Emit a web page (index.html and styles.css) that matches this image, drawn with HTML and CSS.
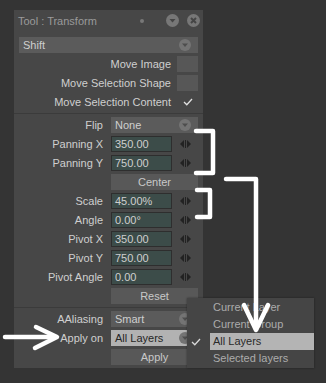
FILE: index.html
```html
<!DOCTYPE html>
<html lang="en">
<head>
    <meta charset="UTF-8">
    <meta name="viewport" content="width=device-width, initial-scale=1.0">
    <title>Tool : Transform</title>
    <link rel="stylesheet" href="styles.css">
</head>
<body>
    <div class="panel">
        <div class="titlebar">
            <span class="title">Tool : Transform</span>
            <span class="dot"></span>
            <svg class="tb-icon" width="13" height="13" viewBox="0 0 13 13">
                <circle cx="6.5" cy="6.5" r="6.5" fill="#777"/>
                <polygon points="3.5,5 9.5,5 6.5,8.5" fill="#454545"/>
            </svg>
            <svg class="tb-icon" width="13" height="13" viewBox="0 0 13 13">
                <circle cx="6.5" cy="6.5" r="6.5" fill="#777"/>
                <path d="M4 4 L9 9 M9 4 L4 9" stroke="#454545" stroke-width="2"/>
            </svg>
        </div>
        <div class="body">
            <div class="select">
                <span>Shift</span>
                <svg class="caret" width="12" height="12" viewBox="0 0 12 12"><circle cx="6" cy="6" r="6" fill="#747474"/><polygon points="3,4.5 9,4.5 6,8" fill="#4e4e4e"/></svg>
            </div>

            <div class="check-row"><span class="label">Move Image</span><span class="box"></span></div>
            <div class="check-row"><span class="label">Move Selection Shape</span><span class="box"></span></div>
            <div class="check-row">
                <span class="label">Move Selection Content</span>
                <span class="tick"><svg width="10" height="8" viewBox="0 0 10 8"><path d="M1 4 L3.8 6.8 L9 1" fill="none" stroke="#e0e0e0" stroke-width="1.3"/></svg></span>
            </div>

            <div class="sep"></div>

            <div class="row">
                <span class="label">Flip</span>
                <div class="select"><span>None</span><svg class="caret" width="12" height="12" viewBox="0 0 12 12"><circle cx="6" cy="6" r="6" fill="#747474"/><polygon points="3,4.5 9,4.5 6,8" fill="#4e4e4e"/></svg></div>
            </div>
            <div class="row">
                <span class="label">Panning X</span>
                <div class="num"><span class="field">350.00</span><svg class="spin" width="11" height="8" viewBox="0 0 11 8"><polygon points="0,4 4,0 4,8" fill="#222"/><rect x="5" y="0" width="1" height="8" fill="#222"/><polygon points="7,0 11,4 7,8" fill="#222"/></svg></div>
            </div>
            <div class="row">
                <span class="label">Panning Y</span>
                <div class="num"><span class="field">750.00</span><svg class="spin" width="11" height="8" viewBox="0 0 11 8"><polygon points="0,4 4,0 4,8" fill="#222"/><rect x="5" y="0" width="1" height="8" fill="#222"/><polygon points="7,0 11,4 7,8" fill="#222"/></svg></div>
            </div>
            <div class="row">
                <span></span>
                <div class="button">Center</div>
            </div>
            <div class="row">
                <span class="label">Scale</span>
                <div class="num"><span class="field">45.00%</span><svg class="spin" width="11" height="8" viewBox="0 0 11 8"><polygon points="0,4 4,0 4,8" fill="#222"/><rect x="5" y="0" width="1" height="8" fill="#222"/><polygon points="7,0 11,4 7,8" fill="#222"/></svg></div>
            </div>
            <div class="row">
                <span class="label">Angle</span>
                <div class="num"><span class="field">0.00°</span><svg class="spin" width="11" height="8" viewBox="0 0 11 8"><polygon points="0,4 4,0 4,8" fill="#222"/><rect x="5" y="0" width="1" height="8" fill="#222"/><polygon points="7,0 11,4 7,8" fill="#222"/></svg></div>
            </div>
            <div class="row">
                <span class="label">Pivot X</span>
                <div class="num"><span class="field">350.00</span><svg class="spin" width="11" height="8" viewBox="0 0 11 8"><polygon points="0,4 4,0 4,8" fill="#222"/><rect x="5" y="0" width="1" height="8" fill="#222"/><polygon points="7,0 11,4 7,8" fill="#222"/></svg></div>
            </div>
            <div class="row">
                <span class="label">Pivot Y</span>
                <div class="num"><span class="field">750.00</span><svg class="spin" width="11" height="8" viewBox="0 0 11 8"><polygon points="0,4 4,0 4,8" fill="#222"/><rect x="5" y="0" width="1" height="8" fill="#222"/><polygon points="7,0 11,4 7,8" fill="#222"/></svg></div>
            </div>
            <div class="row">
                <span class="label">Pivot Angle</span>
                <div class="num"><span class="field">0.00</span><svg class="spin" width="11" height="8" viewBox="0 0 11 8"><polygon points="0,4 4,0 4,8" fill="#222"/><rect x="5" y="0" width="1" height="8" fill="#222"/><polygon points="7,0 11,4 7,8" fill="#222"/></svg></div>
            </div>
            <div class="row">
                <span></span>
                <div class="button">Reset</div>
            </div>

            <div class="sep"></div>

            <div class="row">
                <span class="label">AAliasing</span>
                <div class="select"><span>Smart</span><svg class="caret" width="12" height="12" viewBox="0 0 12 12"><circle cx="6" cy="6" r="6" fill="#747474"/><polygon points="3,4.5 9,4.5 6,8" fill="#4e4e4e"/></svg></div>
            </div>
            <div class="row">
                <span class="label">Apply on</span>
                <div class="select open"><span>All Layers</span><svg class="caret" width="12" height="12" viewBox="0 0 12 12"><circle cx="6" cy="6" r="6" fill="#747474"/><polygon points="3,4.5 9,4.5 6,8" fill="#4e4e4e"/></svg></div>
            </div>
            <div class="row">
                <span></span>
                <div class="button">Apply</div>
            </div>
        </div>
    </div>

    <!-- dropdown list of "Apply on" -->
    <ul class="menu">
        <li>Current Layer</li>
        <li>Current Group</li>
        <li class="selected"><svg class="menu-tick" width="10" height="8" viewBox="0 0 10 8"><path d="M1 4 L3.8 6.8 L9 1" fill="none" stroke="#d8d8d8" stroke-width="1.3"/></svg>All Layers</li>
        <li>Selected layers</li>
    </ul>

    <!-- hand drawn annotations -->
    <svg class="notes" width="326" height="383" viewBox="0 0 326 383">
        <g fill="none" stroke="#fff" stroke-width="4.5" stroke-linecap="round" stroke-linejoin="round">
            <path d="M196 131 H213 V173 H196"/>
            <path d="M197 190 H210 V217 H197"/>
            <path d="M226 179 H256 V329"/>
            <path d="M244 305 L256 330 L268 305"/>
            <path d="M5 337 H55"/>
            <path d="M36 327 L57 337 L35 348"/>
        </g>
    </svg>
</body>
</html>
```

FILE: styles.css
```css
body {
    margin: 0;
    background: #343434;
    font-family: 'Liberation Sans', Arial, sans-serif;
    font-size: 11px;
    position: relative;
    width: 326px;
    height: 383px;
    overflow: hidden;
}
.panel {
    margin: 10px 0 0 14px;
    width: 189px;
    height: 358px;
    background: #474747;
    box-sizing: border-box;
}
.titlebar {
    height: 21px;
    display: flex;
    align-items: center;
    padding: 0 3px 0 4px;
}
.title {
    flex: 1;
    color: #9a9a9a;
}
.dot {
    width: 4px;
    height: 4px;
    border-radius: 50%;
    background: #787878;
    margin-right: 14px;
}
.tb-icon {
    margin-left: 8px;
}
.body {
    padding: 6px 5px 0 5px;
    display: flex;
    flex-direction: column;
    gap: 3px;
}
.select {
    height: 16px;
    line-height: 16px;
    background: #5b5b5b;
    color: #cfcfcf;
    padding: 0 7px 0 4px;
    display: flex;
    align-items: center;
    justify-content: space-between;
}
.select.open {
    background: #b2b2b2;
    color: #262626;
}
.check-row {
    display: grid;
    grid-template-columns: 1fr 21px;
    column-gap: 6px;
    height: 16px;
    line-height: 16px;
}
.check-row .label {
    text-align: right;
    color: #cfcfcf;
}
.box {
    background: #575757;
}
.tick {
    display: flex;
    align-items: center;
    justify-content: center;
}
.sep {
    height: 1px;
    background: #3b3b3b;
    margin: 0 -5px;
}
.row {
    display: grid;
    grid-template-columns: 84px 87px;
    column-gap: 8px;
    height: 16px;
    line-height: 16px;
}
.row .label {
    text-align: right;
    color: #cfcfcf;
}
.num {
    display: flex;
    align-items: center;
}
.field {
    width: 61px;
    height: 16px;
    box-sizing: border-box;
    border: 1px solid #2e2e2e;
    background: #3c4c49;
    color: #cfcfcf;
    line-height: 14px;
    padding-left: 3px;
}
.spin {
    margin-left: 8px;
}
.button {
    background: #585858;
    color: #c8c8c8;
    text-align: center;
}
.menu {
    position: absolute;
    left: 187px;
    top: 298px;
    width: 127px;
    height: 70px;
    margin: 0;
    padding: 1px 0 0 0;
    box-sizing: border-box;
    list-style: none;
    background: #454545;
    box-shadow: 0 0 2px rgba(0, 0, 0, 0.4);
}
.menu li {
    height: 17px;
    line-height: 17px;
    margin-left: 23px;
    padding-left: 3px;
    color: #acacac;
    font-size: 11px;
    position: relative;
}
.menu li.selected {
    background: #b4b4b4;
    color: #2a2a2a;
}
.menu-tick {
    position: absolute;
    left: -19px;
    top: 5px;
}
.notes {
    position: absolute;
    left: 0;
    top: 0;
    pointer-events: none;
}
```
